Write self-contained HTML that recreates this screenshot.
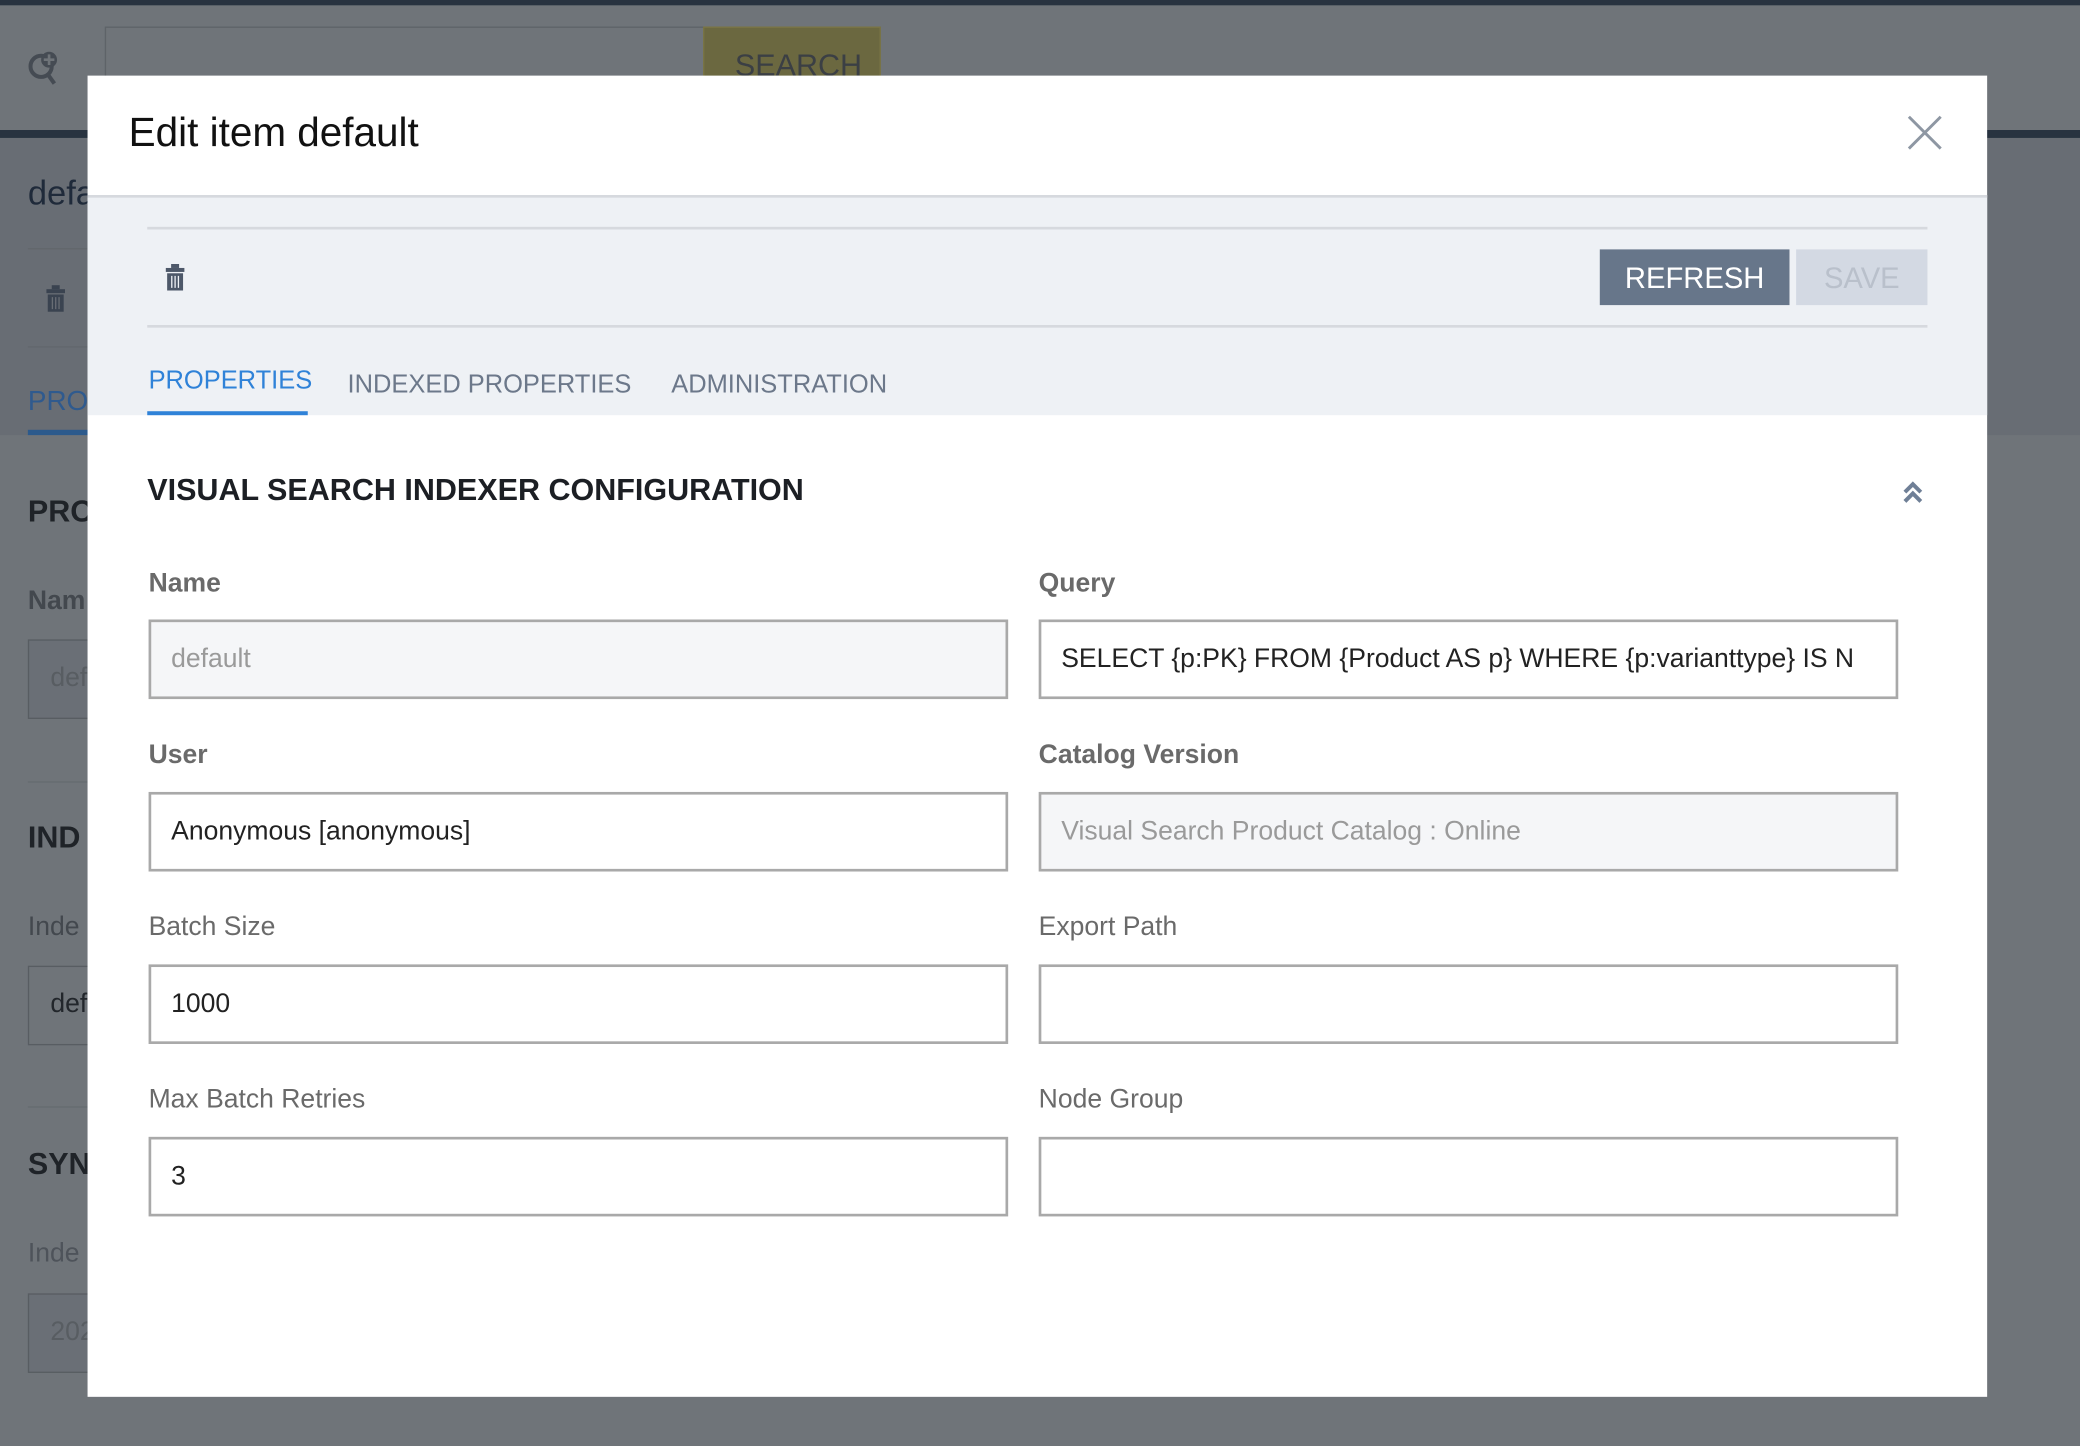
<!DOCTYPE html>
<html><head><meta charset="utf-8"><style>
*{box-sizing:border-box;margin:0;padding:0}
html,body{width:2080px;height:1446px;overflow:hidden;background:#6f7479}
#w{position:absolute;left:0;top:0;width:1568px;height:1090px;transform:scale(1.326531);transform-origin:0 0;font-family:"Liberation Sans",sans-serif;background:#6f7479}
.a{position:absolute}
.bg{color:#22272e}
.lbl{position:absolute;font-size:20px;color:#6a6a6a}
.b{font-weight:bold}
.in{position:absolute;height:60px;width:648px;border:2px solid #a9a9a9;background:#fff;font-size:20px;color:#222;padding:0 0 0 15px;line-height:57px;white-space:nowrap;overflow:hidden}
.dis{background:#f5f6f8;color:#9a9a9a}
</style></head><body><div id="w">
<div class="a" style="left:0;top:0;width:1568px;height:4px;background:#283340"></div>
<div class="a" style="left:0;top:98px;width:1568px;height:6px;background:#283340"></div>
<div class="a" style="left:0;top:104px;width:1568px;height:224px;background:#686d74"></div>
<div class="a" style="left:79px;top:20px;width:452px;height:45px;border:1px solid #5e6368;background:#6f7479"></div>
<div class="a" style="left:530px;top:20px;width:134px;height:45px;background:#6b6840;border:1px solid #7a7545;color:#3b3f44;font-size:23px;padding:15px 0 0 23px">SEARCH</div>
<svg class="a" style="left:20px;top:36px" width="26" height="30" viewBox="0 0 26 30"><circle cx="11" cy="14" r="8" fill="none" stroke="#454b53" stroke-width="3"/><line x1="16" y1="20" x2="21" y2="27" stroke="#454b53" stroke-width="3"/><circle cx="17" cy="9" r="6" fill="#454b53"/><path d="M17 5v8M13 9h8" stroke="#6f7479" stroke-width="2"/></svg>
<div class="a bg" style="left:21px;top:130px;font-size:26px;color:#1f2a3a">defa</div>
<div class="a" style="left:21px;top:187px;width:60px;height:1px;background:#62676c"></div>
<div class="a" style="left:21px;top:261px;width:60px;height:1px;background:#62676c"></div>
<svg class="a" style="left:34px;top:214px" width="16" height="22" viewBox="0 0 16 22"><rect x="1" y="4" width="14" height="3" fill="#3a4350"/><rect x="5" y="1" width="6" height="3" fill="#3a4350"/><rect x="2" y="8" width="12" height="13" fill="#3a4350"/><path d="M5.5 10v9M8 10v9M10.5 10v9" stroke="#686d74" stroke-width="1"/></svg>
<div class="a" style="left:21px;top:291px;font-size:21px;color:#2f5a8e">PRO</div>
<div class="a" style="left:21px;top:324px;width:60px;height:4px;background:#2c5a8c"></div>
<div class="a b" style="left:21px;top:372px;font-size:23px;color:#1f2328">PRO</div>
<div class="a b" style="left:21px;top:442px;font-size:20px;color:#43484e">Nam</div>
<div class="a" style="left:21px;top:482px;width:60px;height:60px;border:1px solid #585d62;background:#6a6f76;color:#585d62;font-size:20px;padding:17px 0 0 16px">def</div>
<div class="a" style="left:21px;top:589px;width:60px;height:1px;background:#666b70"></div>
<div class="a b" style="left:21px;top:618px;font-size:23px;color:#1f2328">IND</div>
<div class="a" style="left:21px;top:688px;font-size:20px;color:#43484e">Inde</div>
<div class="a" style="left:21px;top:728px;width:60px;height:60px;border:1px solid #585d62;color:#22262b;font-size:20px;padding:17px 0 0 16px">def</div>
<div class="a" style="left:21px;top:834px;width:60px;height:1px;background:#666b70"></div>
<div class="a b" style="left:21px;top:864px;font-size:23px;color:#1f2328">SYN</div>
<div class="a" style="left:21px;top:934px;font-size:20px;color:#4e535a">Inde</div>
<div class="a" style="left:21px;top:975px;width:60px;height:60px;border:1px solid #585d62;background:#6a6f76;color:#585d62;font-size:20px;padding:17px 0 0 16px">202</div>

<div class="a" style="left:66px;top:57px;width:1432px;height:996px;background:#fff">
 <div class="a" style="left:31px;top:26px;font-size:30.5px;color:#111">Edit item default</div>
 <svg class="a" style="left:1372px;top:30px" width="26" height="26" viewBox="0 0 26 26"><path d="M1 1L25 25M25 1L1 25" stroke="#8e97a3" stroke-width="2.2"/></svg>
 <div class="a" style="left:0;top:90px;width:1432px;height:166px;background:#eef1f5;border-top:2px solid #d6d9de"></div>
 <div class="a" style="left:45px;top:114px;width:1342px;height:2px;background:#d6d9de"></div>
 <div class="a" style="left:45px;top:188px;width:1342px;height:2px;background:#d6d9de"></div>
 <svg class="a" style="left:58px;top:142px" width="16" height="21" viewBox="0 0 16 21"><rect x="1" y="3" width="14" height="3" fill="#4d5869"/><rect x="5" y="0" width="6" height="3" fill="#4d5869"/><rect x="2" y="7" width="12" height="13" fill="#4d5869"/><path d="M5.5 9v9M8 9v9M10.5 9v9" stroke="#eef1f5" stroke-width="1"/></svg>
 <div class="a" style="left:1140px;top:131px;width:143px;height:42px;background:#67768a;color:#fff;font-size:22px;text-align:center;line-height:43px">REFRESH</div>
 <div class="a" style="left:1288px;top:131px;width:99px;height:42px;background:#d3d9e3;color:#b9c0cb;font-size:22px;text-align:center;line-height:43px">SAVE</div>
 <div class="a" style="left:46px;top:220px;font-size:19.2px;color:#2f82d8">PROPERTIES</div>
 <div class="a" style="left:45px;top:253px;width:121px;height:3px;background:#2f82d8"></div>
 <div class="a" style="left:196px;top:223px;font-size:19.2px;color:#6c788a">INDEXED PROPERTIES</div>
 <div class="a" style="left:440px;top:223px;font-size:19.2px;color:#6c788a">ADMINISTRATION</div>
 <div class="a b" style="left:45px;top:299px;font-size:23px;color:#1c1f24">VISUAL SEARCH INDEXER CONFIGURATION</div>
 <svg class="a" style="left:1367px;top:305px" width="18" height="18" viewBox="0 0 18 18"><path d="M3 9L9 3L15 9M3 16L9 10L15 16" fill="none" stroke="#6f7f96" stroke-width="3"/></svg>
</div>
<div class="lbl b" style="left:112px;top:429px">Name</div>
<div class="lbl b" style="left:783px;top:429px">Query</div>
<div class="in dis" style="left:112px;top:467px">default</div>
<div class="in" style="left:783px;top:467px">SELECT {p:PK} FROM {Product AS p} WHERE {p:varianttype} IS N</div>
<div class="lbl b" style="left:112px;top:558px">User</div>
<div class="lbl b" style="left:783px;top:558px">Catalog Version</div>
<div class="in" style="left:112px;top:597px">Anonymous [anonymous]</div>
<div class="in dis" style="left:783px;top:597px">Visual Search Product Catalog : Online</div>
<div class="lbl" style="left:112px;top:688px">Batch Size</div>
<div class="lbl" style="left:783px;top:688px">Export Path</div>
<div class="in" style="left:112px;top:727px">1000</div>
<div class="in" style="left:783px;top:727px"></div>
<div class="lbl" style="left:112px;top:818px">Max Batch Retries</div>
<div class="lbl" style="left:783px;top:818px">Node Group</div>
<div class="in" style="left:112px;top:857px">3</div>
<div class="in" style="left:783px;top:857px"></div>
</div></body></html>
